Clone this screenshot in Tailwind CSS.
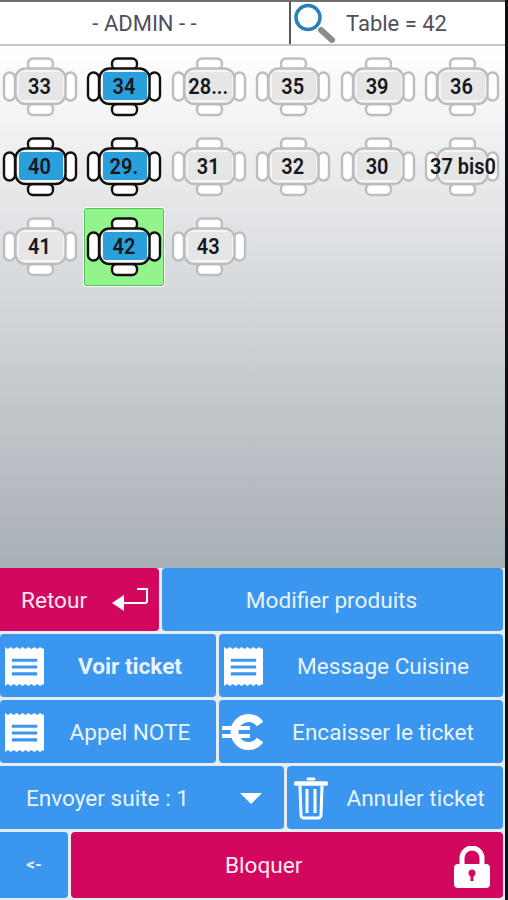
<!DOCTYPE html>
<html lang="fr">

<head>
    <meta charset="UTF-8">
    <title>Tables</title>
    <script src="https://cdn.jsdelivr.net/npm/@tailwindcss/browser@4"></script>
</head>

<body class="m-0 overflow-hidden bg-[#6f6f6f]">
    <svg class="hidden">
        <symbol id="table" viewBox="0 0 76 60">
            <g stroke="currentColor" stroke-width="2.4" fill="#fff">
                <rect x="26" y="1.500" width="25" height="11" rx="5" />
                <rect x="26" y="47" width="25" height="11" rx="5" />
                <rect x="2" y="15.500" width="11" height="28" rx="5.500" />
                <rect x="63" y="15.500" width="11" height="28" rx="5.500" />
                <rect x="13.500" y="11.500" width="50" height="35.500" rx="10" fill="#f5f5f5" />
            </g>
        </symbol>
        <symbol id="receipt" viewBox="0 0 40 40">
            <path fill="#fff" d="M0 1l3 2 3-2 3 2 3-2 3 2 3-2 3 2 3-2 3 2 3-2 3 2 3-2 3 2 1-1v38l-1-1-3 2-3-2-3 2-3-2-3 2-3-2-3 2-3-2-3 2-3-2-3 2-3-2-3 2-1-1z" />
            <path fill="#3a96ee" d="M7 13h26v3.200H7zM7 20h26v3.200H7zM7 27h26v3.200H7z" />
        </symbol>
    </svg>

    <div class="flex h-[900px]">
        <div class="flex flex-col w-[505px] h-[900px] mt-[2px] bg-[#e4ecf4] font-['Roboto',sans-serif]">
            <header class="flex h-[44px] shrink-0 bg-white border-b-2 border-[#c4c4c4] text-[22px] text-[#50505a]">
                <div class="w-[289px] flex items-center justify-center">- ADMIN - -</div>
                <div class="flex-1 flex items-center border-l-2 border-[#55595c]">
                    <svg class="w-[44px] h-[44px] ml-[3px]" viewBox="0 0 44 44">
                        <path d="M27 29l11 10" stroke="#8c8c8c" stroke-width="6" stroke-linecap="round" />
                        <circle cx="14" cy="16.500" r="12" fill="#fff" stroke="#2a80bb" stroke-width="3.500" />
                    </svg>
                    <span class="ml-[8px]">Table = 42</span>
                </div>
            </header>

            <main class="h-[522px] shrink-0 bg-gradient-to-b from-white to-[#a8afb6] pt-[2px] flex flex-wrap content-start gap-y-[2px] gap-x-[4.4px] font-semibold text-[20px] text-[#17171c]">
                <div class="w-[80px] h-[78px] flex items-center justify-center relative text-[#bdbdbd]"><svg class="w-[76px] h-[60px]"><use href="#table" /></svg><span class="absolute left-[19px] right-[17px] top-[24px] h-[28px] rounded-[3px] bg-[#e6e6e6] flex justify-center items-center text-[#17171c] whitespace-nowrap pr-[3px]"><span class="scale-y-110">33</span></span></div>
                <div class="w-[80px] h-[78px] flex items-center justify-center relative text-[#111]"><svg class="w-[76px] h-[60px]"><use href="#table" /></svg><span class="absolute left-[19px] right-[17px] top-[24px] h-[28px] rounded-[3px] bg-[#29a0dc] flex justify-center items-center text-[#17171c] whitespace-nowrap pr-[3px]"><span class="scale-y-110">34</span></span></div>
                <div class="w-[80px] h-[78px] flex items-center justify-center relative text-[#bdbdbd]"><svg class="w-[76px] h-[60px]"><use href="#table" /></svg><span class="absolute left-[19px] right-[17px] top-[24px] h-[28px] rounded-[3px] bg-[#e6e6e6] flex justify-center items-center text-[#17171c] whitespace-nowrap pr-[3px]"><span class="scale-y-110">28...</span></span></div>
                <div class="w-[80px] h-[78px] flex items-center justify-center relative text-[#bdbdbd]"><svg class="w-[76px] h-[60px]"><use href="#table" /></svg><span class="absolute left-[19px] right-[17px] top-[24px] h-[28px] rounded-[3px] bg-[#e6e6e6] flex justify-center items-center text-[#17171c] whitespace-nowrap pr-[3px]"><span class="scale-y-110">35</span></span></div>
                <div class="w-[80px] h-[78px] flex items-center justify-center relative text-[#bdbdbd]"><svg class="w-[76px] h-[60px]"><use href="#table" /></svg><span class="absolute left-[19px] right-[17px] top-[24px] h-[28px] rounded-[3px] bg-[#e6e6e6] flex justify-center items-center text-[#17171c] whitespace-nowrap pr-[3px]"><span class="scale-y-110">39</span></span></div>
                <div class="w-[80px] h-[78px] flex items-center justify-center relative text-[#bdbdbd]"><svg class="w-[76px] h-[60px]"><use href="#table" /></svg><span class="absolute left-[19px] right-[17px] top-[24px] h-[28px] rounded-[3px] bg-[#e6e6e6] flex justify-center items-center text-[#17171c] whitespace-nowrap pr-[3px]"><span class="scale-y-110">36</span></span></div>

                <div class="w-[80px] h-[78px] flex items-center justify-center relative text-[#111]"><svg class="w-[76px] h-[60px]"><use href="#table" /></svg><span class="absolute left-[19px] right-[17px] top-[24px] h-[28px] rounded-[3px] bg-[#29a0dc] flex justify-center items-center text-[#17171c] whitespace-nowrap pr-[3px]"><span class="scale-y-110">40</span></span></div>
                <div class="w-[80px] h-[78px] flex items-center justify-center relative text-[#111]"><svg class="w-[76px] h-[60px]"><use href="#table" /></svg><span class="absolute left-[19px] right-[17px] top-[24px] h-[28px] rounded-[3px] bg-[#29a0dc] flex justify-center items-center text-[#17171c] whitespace-nowrap pr-[3px]"><span class="scale-y-110">29.</span></span></div>
                <div class="w-[80px] h-[78px] flex items-center justify-center relative text-[#bdbdbd]"><svg class="w-[76px] h-[60px]"><use href="#table" /></svg><span class="absolute left-[19px] right-[17px] top-[24px] h-[28px] rounded-[3px] bg-[#e6e6e6] flex justify-center items-center text-[#17171c] whitespace-nowrap pr-[3px]"><span class="scale-y-110">31</span></span></div>
                <div class="w-[80px] h-[78px] flex items-center justify-center relative text-[#bdbdbd]"><svg class="w-[76px] h-[60px]"><use href="#table" /></svg><span class="absolute left-[19px] right-[17px] top-[24px] h-[28px] rounded-[3px] bg-[#e6e6e6] flex justify-center items-center text-[#17171c] whitespace-nowrap pr-[3px]"><span class="scale-y-110">32</span></span></div>
                <div class="w-[80px] h-[78px] flex items-center justify-center relative text-[#bdbdbd]"><svg class="w-[76px] h-[60px]"><use href="#table" /></svg><span class="absolute left-[19px] right-[17px] top-[24px] h-[28px] rounded-[3px] bg-[#e6e6e6] flex justify-center items-center text-[#17171c] whitespace-nowrap pr-[3px]"><span class="scale-y-110">30</span></span></div>
                <div class="w-[80px] h-[78px] flex items-center justify-center relative text-[#bdbdbd]"><svg class="w-[76px] h-[60px]"><use href="#table" /></svg><span class="absolute left-[19px] right-[17px] top-[24px] h-[28px] rounded-[3px] bg-[#e6e6e6] flex justify-center items-center text-[#17171c] whitespace-nowrap"><span class="scale-y-110">37 bis0</span></span></div>

                <div class="w-[80px] h-[78px] flex items-center justify-center relative text-[#bdbdbd]"><svg class="w-[76px] h-[60px]"><use href="#table" /></svg><span class="absolute left-[19px] right-[17px] top-[24px] h-[28px] rounded-[3px] bg-[#e6e6e6] flex justify-center items-center text-[#17171c] whitespace-nowrap pr-[3px]"><span class="scale-y-110">41</span></span></div>
                <div class="w-[80px] h-[78px] flex items-center justify-center relative text-[#111] bg-[#92f58c] border border-[#5cc05c] rounded-[2px] outline outline-white"><svg class="w-[76px] h-[60px]"><use href="#table" /></svg><span class="absolute left-[18px] right-[16px] top-[23px] h-[28px] rounded-[3px] bg-[#29a0dc] flex justify-center items-center text-[#17171c] whitespace-nowrap pr-[3px]"><span class="scale-y-110">42</span></span></div>
                <div class="w-[80px] h-[78px] flex items-center justify-center relative text-[#bdbdbd]"><svg class="w-[76px] h-[60px]"><use href="#table" /></svg><span class="absolute left-[19px] right-[17px] top-[24px] h-[28px] rounded-[3px] bg-[#e6e6e6] flex justify-center items-center text-[#17171c] whitespace-nowrap pr-[3px]"><span class="scale-y-110">43</span></span></div>
            </main>

            <section class="flex-1 flex flex-col gap-[3px] pr-[2px] text-[22.6px] text-[#eaf3fd]">
                <div class="flex gap-[3px] h-[63px]">
                    <button class="w-[159px] bg-[#d2085f] rounded-r-[4px] flex items-center text-[#fbe8f0] pl-[21px]">
                        <span class="pt-[2px]">Retour</span>
                        <svg class="w-[37px] h-[24px] ml-[25px]" viewBox="0 0 37 24" fill="none">
                            <path d="M11 15h22a2 2 0 0 0 2-2V1h-10" stroke="#fff" stroke-width="2" />
                            <path d="M0 15l12-8v16z" fill="#fff" />
                        </svg>
                    </button>
                    <button class="flex-1 bg-[#3a96ee] rounded-[4px] pt-[2px] pr-[2px]">Modifier produits</button>
                </div>
                <div class="flex gap-[3px] h-[63px]">
                    <button class="w-[216px] bg-[#3a96ee] rounded-[4px] flex items-center font-bold pl-[5px]">
                        <svg class="w-[39px] h-[41px] shrink-0"><use href="#receipt" /></svg>
                        <span class="flex-1 text-center pl-[4px] pr-[4px] pt-[2px]">Voir ticket</span>
                    </button>
                    <button class="flex-1 bg-[#3a96ee] rounded-[4px] flex items-center pl-[5px]">
                        <svg class="w-[39px] h-[41px] shrink-0"><use href="#receipt" /></svg>
                        <span class="flex-1 text-center pt-[2px]">Message Cuisine</span>
                    </button>
                </div>
                <div class="flex gap-[3px] h-[63px]">
                    <button class="w-[216px] bg-[#3a96ee] rounded-[4px] flex items-center pl-[5px]">
                        <svg class="w-[39px] h-[41px] shrink-0"><use href="#receipt" /></svg>
                        <span class="flex-1 text-center pl-[4px] pr-[4px] pt-[2px]">Appel NOTE</span>
                    </button>
                    <button class="flex-1 bg-[#3a96ee] rounded-[4px] flex items-center pl-[3px]">
                        <svg class="w-[46px] h-[36px] shrink-0" viewBox="0 0 46 36" fill="none">
                            <path d="M38 10A14 14 0 1 0 38 26" stroke="#fff" stroke-width="8" />
                            <path d="M0 14h28M0 22h28" stroke="#fff" stroke-width="4" />
                        </svg>
                        <span class="flex-1 text-center pr-[5px] pt-[2px]">Encaisser le ticket</span>
                    </button>
                </div>
                <div class="flex gap-[3px] h-[63px]">
                    <button class="w-[284px] bg-[#3a96ee] rounded-r-[4px] flex items-center pl-[26px] relative">
                        <span class="pt-[2px]">Envoyer suite : 1</span>
                        <span class="absolute left-[240px] top-[27px] w-0 h-0 border-x-[11px] border-x-transparent border-t-[11px] border-t-white"></span>
                    </button>
                    <button class="flex-1 bg-[#3a96ee] rounded-[4px] flex items-center pl-[7px]">
                        <svg class="w-[34px] h-[44px] shrink-0" viewBox="0 0 34 44" fill="none" stroke="#fff">
                            <path d="M2 7.500h30" stroke-width="4.500" stroke-linecap="round" />
                            <path d="M14 3h6" stroke-width="3" stroke-linecap="round" />
                            <path d="M6 10l1 29a3 3 0 0 0 3 3h14a3 3 0 0 0 3-3l1-29" stroke-width="3" />
                            <path d="M13 13v24M21 13v24" stroke-width="3" />
                        </svg>
                        <span class="flex-1 text-center pt-[2px]">Annuler ticket</span>
                    </button>
                </div>
                <div class="flex gap-[3px] h-[66px]">
                    <button class="w-[68px] bg-[#3a96ee] rounded-r-[4px] text-[17px] font-bold">&lt;-</button>
                    <button class="flex-1 bg-[#d2085f] rounded-[4px] text-[#fbe8f0] flex items-center relative pl-[154px]">
                        <span class="pt-[2px]">Bloquer</span>
                        <svg class="absolute right-[12px] top-[14px] w-[38px] h-[42px]" viewBox="0 0 38 42">
                            <path d="M9 19v-7a10 10 0 0 1 20 0v7" fill="none" stroke="#fff" stroke-width="5" />
                            <rect x="1" y="18" width="36" height="24" rx="4" fill="#fff" />
                            <circle cx="19" cy="27" r="3.500" fill="#d2085f" />
                            <path d="M17.500 28h3v7h-3z" fill="#d2085f" />
                        </svg>
                    </button>
                </div>
            </section>
        </div>
        <div class="flex-1 bg-[#0f0f16]"></div>
    </div>
</body>

</html>
